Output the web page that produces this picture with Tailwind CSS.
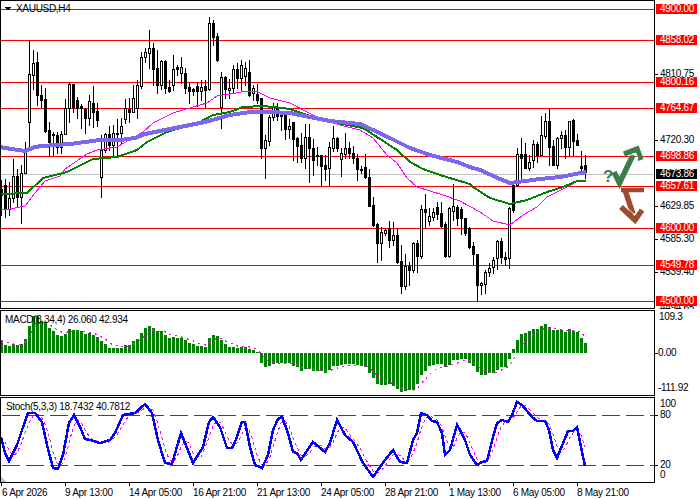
<!DOCTYPE html>
<html>
<head>
<meta charset="utf-8">
<title>XAUUSD,H4</title>
<script src="https://cdn.jsdelivr.net/npm/@tailwindcss/browser@4"></script>
</head>
<body class="bg-white">
<div class="w-[700px] h-[500px] overflow-hidden flex flex-col gap-px bg-white text-black font-['Liberation_Sans',Arial,sans-serif] text-[10px] leading-[10px] tracking-[-0.3px]">

  <!-- price panel -->
  <div class="flex h-[309px] shrink-0">
    <div class="relative w-[655px] h-[309px] border border-black">
      <svg id="main" class="block" width="653" height="307" viewBox="1 1 653 307" shape-rendering="crispEdges"></svg>
      <div class="absolute left-[15px] top-[2px] leading-[11px]">XAUUSD,H4</div>
    </div>
    <div class="relative w-[45px] h-[309px] overflow-hidden">
      <div class="absolute left-0 top-[74px] w-[3px] h-px bg-black"></div>
      <div class="absolute left-0 top-[140px] w-[3px] h-px bg-black"></div>
      <div class="absolute left-0 top-[206px] w-[3px] h-px bg-black"></div>
      <div class="absolute left-0 top-[239px] w-[3px] h-px bg-black"></div>
      <div class="absolute left-0 top-[272px] w-[3px] h-px bg-black"></div>
      <div class="absolute left-[5px] top-[69px]">4810.75</div>
      <div class="absolute left-[5px] top-[135px]">4720.30</div>
      <div class="absolute left-[5px] top-[201px]">4629.85</div>
      <div class="absolute left-[5px] top-[234px]">4585.30</div>
      <div class="absolute left-[5px] top-[267px]">4539.40</div>
      <div class="absolute left-[5px] top-[303px]">4494.65</div>
      <div class="absolute left-px top-[4px] w-[41px] h-[10px] pl-1 bg-[#ff0000] text-white">4900.00</div>
      <div class="absolute left-px top-[35px] w-[41px] h-[10px] pl-1 bg-[#ff0000] text-white">4858.02</div>
      <div class="absolute left-px top-[77px] w-[41px] h-[10px] pl-1 bg-[#ff0000] text-white">4800.16</div>
      <div class="absolute left-px top-[103px] w-[41px] h-[10px] pl-1 bg-[#ff0000] text-white">4764.67</div>
      <div class="absolute left-px top-[151px] w-[41px] h-[10px] pl-1 bg-[#ff0000] text-white">4698.86</div>
      <div class="absolute left-px top-[169px] w-[41px] h-[10px] pl-1 bg-black text-white">4673.86</div>
      <div class="absolute left-px top-[181px] w-[41px] h-[10px] pl-1 bg-[#ff0000] text-white">4657.61</div>
      <div class="absolute left-px top-[223px] w-[41px] h-[10px] pl-1 bg-[#ff0000] text-white">4600.00</div>
      <div class="absolute left-px top-[260px] w-[41px] h-[10px] pl-1 bg-[#ff0000] text-white">4549.78</div>
      <div class="absolute left-px top-[296px] w-[41px] h-[10px] pl-1 bg-[#ff0000] text-white">4500.00</div>
    </div>
  </div>

  <!-- macd panel -->
  <div class="flex h-[86px] shrink-0">
    <div class="relative w-[655px] h-[86px] border border-black">
      <svg id="macd" class="block" width="653" height="84" viewBox="1 311 653 84" shape-rendering="crispEdges"></svg>
      <div class="absolute left-[4px] top-[3px] leading-[11px]">MACD(8,34,4) 26.060 42.934</div>
    </div>
    <div class="relative w-[45px] h-[86px]">
      <div class="absolute left-0 top-[43px] w-[3px] h-px bg-black"></div>
      <div class="absolute left-[4px] top-[2px]">109.3</div>
      <div class="absolute left-[3px] top-[38px]">0.00</div>
      <div class="absolute left-[3px] top-[73px]">-111.92</div>
    </div>
  </div>

  <!-- stochastic panel -->
  <div class="flex h-[86px] shrink-0">
    <div class="relative w-[655px] h-[86px] border border-black">
      <svg id="stoch" class="block" width="653" height="84" viewBox="1 398 653 84" shape-rendering="crispEdges"></svg>
      <div class="absolute left-[5px] top-[3px] leading-[11px]">Stoch(5,3,3) 18.7432 40.7812</div>
    </div>
    <div class="relative w-[45px] h-[86px]">
      <div class="absolute left-0 top-[18px] w-[3px] h-px bg-black"></div>
      <div class="absolute left-0 top-[68px] w-[3px] h-px bg-black"></div>
      <div class="absolute left-[5px] top-[2px]">100</div>
      <div class="absolute left-[5px] top-[13px]">80</div>
      <div class="absolute left-[5px] top-[63px]">20</div>
      <div class="absolute left-[5px] top-[73px]">0</div>
    </div>
  </div>

  <!-- time axis -->
  <div class="flex pl-px -mt-px">
    <div class="w-[64px] shrink-0"><div class="w-px h-[3px] bg-black"></div><div class="mt-[2px] whitespace-nowrap pl-px">6 Apr 2026</div></div>
    <div class="w-[64px] shrink-0"><div class="w-px h-[3px] bg-black"></div><div class="mt-[2px] whitespace-nowrap">9 Apr 13:00</div></div>
    <div class="w-[64px] shrink-0"><div class="w-px h-[3px] bg-black"></div><div class="mt-[2px] whitespace-nowrap">14 Apr 05:00</div></div>
    <div class="w-[64px] shrink-0"><div class="w-px h-[3px] bg-black"></div><div class="mt-[2px] whitespace-nowrap">16 Apr 21:00</div></div>
    <div class="w-[64px] shrink-0"><div class="w-px h-[3px] bg-black"></div><div class="mt-[2px] whitespace-nowrap">21 Apr 13:00</div></div>
    <div class="w-[64px] shrink-0"><div class="w-px h-[3px] bg-black"></div><div class="mt-[2px] whitespace-nowrap">24 Apr 05:00</div></div>
    <div class="w-[64px] shrink-0"><div class="w-px h-[3px] bg-black"></div><div class="mt-[2px] whitespace-nowrap">28 Apr 21:00</div></div>
    <div class="w-[64px] shrink-0"><div class="w-px h-[3px] bg-black"></div><div class="mt-[2px] whitespace-nowrap">1 May 13:00</div></div>
    <div class="w-[64px] shrink-0"><div class="w-px h-[3px] bg-black"></div><div class="mt-[2px] whitespace-nowrap">6 May 05:00</div></div>
    <div class="w-[64px] shrink-0"><div class="w-px h-[3px] bg-black"></div><div class="mt-[2px] whitespace-nowrap">8 May 21:00</div></div>
  </div>
</div>

<script>
// candles as pixel rows: high, body top, body bottom, low, 1 = white body
var candles = [
[180,189,195,215,0],[179,185,209,217,0],[182,198,209,215,1],[159,176,198,202,1],[169,176,197,207,0],[165,173,197,223,1],[142,150,173,173,1],[41,74,122,147,1],
[50,63,75,89,1],[52,62,95,105,0],[85,95,100,107,0],[88,99,131,132,0],[122,130,142,156,0],[132,134,135,155,0],[132,135,147,153,0],[131,134,147,153,1],
[99,108,134,134,1],[82,84,108,122,1],[84,84,107,112,0],[97,100,108,118,0],[104,106,108,128,0],[108,109,118,133,0],[95,101,118,125,1],[86,103,112,127,0],
[103,111,120,126,0],[135,150,177,197,1],[133,134,150,152,1],[126,134,145,150,0],[125,133,145,155,1],[119,133,134,156,0],[118,126,133,143,1],[99,108,119,123,1],
[98,109,112,122,0],[85,98,112,112,1],[80,85,108,118,1],[52,57,86,88,1],[48,52,57,62,1],[30,48,53,68,1],[43,48,69,85,0],[50,68,85,93,0],
[60,61,85,89,1],[60,61,88,93,0],[80,87,91,92,0],[55,69,85,90,1],[65,67,69,75,0],[57,67,73,83,1],[68,73,88,93,0],[83,87,91,103,0],
[88,89,91,95,0],[82,86,91,106,0],[80,87,91,100,1],[80,86,90,107,0],[17,23,89,90,1],[20,23,37,45,0],[33,36,60,61,0],[72,77,107,128,1],
[76,77,89,98,0],[79,88,90,98,1],[65,69,88,93,1],[63,69,78,88,0],[60,65,78,90,1],[62,68,76,85,1],[60,72,95,96,0],[85,88,93,100,1],
[84,94,100,103,0],[98,98,148,158,0],[135,140,148,178,1],[115,117,141,145,1],[103,107,117,120,1],[103,107,116,120,0],[112,115,116,130,0],[113,115,129,139,0],
[119,126,129,138,1],[122,122,139,160,0],[137,138,146,162,0],[133,145,158,162,0],[124,137,158,168,1],[124,137,148,182,0],[139,148,160,175,0],[147,155,156,165,0],
[155,155,166,186,0],[155,165,169,180,0],[142,147,168,185,1],[126,138,148,151,1],[137,138,148,151,0],[148,153,159,176,1],[133,148,154,158,1],[142,148,153,158,0],
[146,153,158,163,0],[154,158,169,180,0],[166,169,170,173,0],[154,167,177,178,0],[169,177,206,206,0],[197,205,225,226,0],[223,224,243,262,0],[227,232,243,260,1],
[229,230,233,235,1],[221,228,240,247,0],[222,235,240,245,1],[228,235,262,263,0],[245,261,286,293,0],[254,266,286,289,1],[262,266,270,285,0],[242,243,270,272,1],
[240,243,256,272,0],[205,209,256,258,1],[194,209,212,227,0],[208,216,221,225,1],[208,212,217,220,1],[202,207,214,219,0],[202,213,226,227,0],[222,224,256,257,0],
[207,208,256,257,1],[184,206,211,220,1],[205,207,218,225,0],[207,209,218,234,0],[218,218,233,235,0],[227,228,247,248,0],[242,246,254,264,0],[254,254,285,301,0],
[282,283,285,294,1],[270,272,284,293,1],[263,268,272,276,1],[257,260,267,273,1],[240,241,258,269,1],[238,241,257,263,0],[252,257,259,265,0],[207,208,258,268,1],
[182,185,210,212,0],[148,154,185,186,1],[138,154,158,180,0],[143,154,168,168,0],[155,162,168,170,1],[140,144,160,167,1],[142,144,155,162,0],[116,135,155,155,1],
[113,121,136,138,1],[109,121,147,165,0],[140,146,165,165,0],[137,138,165,168,1],[131,135,138,148,1],[130,135,147,158,0],[121,121,147,155,1],[119,120,141,155,0],
[134,140,145,145,0],[151,166,168,173,0],[155,165,172,178,0]
];
var purple = [[0,147],[5,148],[25,151],[35,147],[42,146],[70,144],[100,140],[120,140],[135,138],[145,134],[165,130],[185,126],[205,122],[230,115],[250,112],[270,112],[290,113],[310,117],[330,121],[360,124],[373,130],[390,138],[410,148],[430,155],[457,162],[470,167],[480,170],[500,179],[510,183],[540,179],[560,177],[586,172]];
var green = [[1,194],[27,193],[43,178],[67,172],[93,159],[117,157],[137,150],[147,142],[167,132],[200,122],[213,115],[230,112],[243,107],[263,106],[290,109],[310,116],[337,123],[363,128],[377,137],[397,150],[410,162],[423,169],[443,176],[470,184],[473,187],[490,198],[510,204],[527,200],[547,192],[563,187],[577,181],[586,181]];
var pink = [[1,210],[10,209],[25,206],[35,193],[45,181],[60,176],[65,169],[87,154],[97,150],[117,147],[143,132],[153,123],[173,113],[193,107],[207,103],[217,96],[230,94],[247,91],[258,92],[270,98],[290,103],[307,112],[323,120],[340,125],[360,130],[373,138],[387,155],[397,163],[407,178],[417,187],[443,195],[460,201],[480,212],[493,221],[510,225],[523,215],[537,207],[547,197],[567,187],[578,181]];
var levels = [9,40,82,108,156,186,228,265,301];

function pts(a) { return a.map(function (p) { return p[0] + ',' + p[1]; }).join(' '); }
function line(a, color, width, dash) {
  return '<polyline points="' + pts(a) + '" fill="none" stroke="' + color + '" stroke-width="' + width + '"' + (dash ? ' stroke-dasharray="' + dash + '"' : '') + '/>';
}

var s = '';
s += '<rect x="0" y="174" width="654" height="1" fill="#c0c0c0"/>';
levels.forEach(function (y) { s += '<rect x="0" y="' + y + '" width="654" height="1" fill="#ff0000"/>'; });
candles.forEach(function (c, n) {
  var x = 4 * n;
  s += '<rect x="' + (x + 1) + '" y="' + c[0] + '" width="1" height="' + (c[3] - c[0] + 1) + '" fill="#000"/>';
  s += '<rect x="' + x + '" y="' + c[1] + '" width="3" height="' + (c[2] - c[1] + 1) + '" fill="#000"/>';
  if (c[4] && c[2] - c[1] > 1) s += '<rect x="' + (x + 1) + '" y="' + (c[1] + 1) + '" width="1" height="' + (c[2] - c[1] - 1) + '" fill="#fff"/>';
});
s += line(pink, '#ff00ff', 1);
s += line(green, '#008000', 2);
s += line(purple, '#7b68ee', 4);
s += '<polygon points="5,7 11,7 8,11" fill="#000"/>';
// forecast arrows
s += '<g shape-rendering="auto" fill="none" stroke-linejoin="miter">';
s += '<polyline points="614,172 619.5,183 633,155" stroke="#3c7d49" stroke-width="5.5"/>';
s += '<polyline points="624,154 637,149 641,160" stroke="#3c7d49" stroke-width="5.5"/>';
s += '<polyline points="628,156 636,153 638,159" stroke="#fff" stroke-width="0.8"/>';
s += '<polyline points="621,190 644,190" stroke="#9e4a2c" stroke-width="4.5"/>';
s += '<polyline points="625,190 633,214" stroke="#9e4a2c" stroke-width="5.5"/>';
s += '<polyline points="621,207 635,220 642,210" stroke="#9e4a2c" stroke-width="5.5"/>';
s += '<polyline points="625,206 635,215 639,209" stroke="#fff" stroke-width="0.8"/>';
s += '<text x="603" y="182" font-family="Liberation Sans, sans-serif" font-weight="700" font-size="17" fill="#3c7d49" stroke="none">?</text>';
s += '</g>';
document.getElementById('main').innerHTML = s;

// macd histogram heights in px from the zero row
var bars = [13,8,7,9,8,9,14,27,37,37,32,31,25,22,18,17,19,24,23,23,22,19,20,18,16,12,9,5,5,5,5,8,8,12,14,20,25,27,25,22,22,18,15,16,15,15,13,10,9,7,7,6,15,18,17,13,9,6,6,5,6,6,4,3,1,
-10,-14,-13,-11,-10,-10,-10,-10,-13,-14,-18,-16,-16,-18,-18,-18,-20,-17,-13,-13,-12,-11,-11,-11,-12,-13,-14,-20,-25,-31,-32,-32,-31,-33,-36,-39,-38,-37,-37,-31,-22,-18,-13,-12,-11,-11,-14,-12,-7,-7,-6,-6,-10,-13,-19,-22,-22,-20,-20,-17,-14,-14,-6,
4,13,19,20,22,24,24,27,29,26,23,23,23,21,24,22,21,15,10];
var m = '';
var sig = [], ema = bars[0];
bars.forEach(function (h, n) {
  m += '<rect x="' + (4 * n) + '" y="' + (h > 0 ? 353 - h : 353) + '" width="3" height="' + Math.abs(h) + '" fill="#008000"/>';
  ema += 0.36 * (h - ema);
  sig.push([4 * n + 1.5, Math.round(353 - ema)]);
});
m += line(sig, '#ff00ff', 1, '2 4');
document.getElementById('macd').innerHTML = m;

// stochastic main line, signal is a 3 bar average of it
var st = [[1,437],[5,453],[9,461],[17,445],[22,430],[28,413],[35,413],[42,422],[47,445],[53,468],[58,469],[63,455],[69,423],[74,415],[80,427],[85,439],[90,440],[100,443],[110,440],[115,433],[123,415],[135,413],[145,404],[152,413],[158,440],[165,463],[172,464],[181,433],[193,463],[203,447],[209,422],[213,417],[220,427],[227,448],[232,448],[235,442],[242,422],[245,422],[250,447],[255,465],[262,468],[268,455],[273,430],[278,419],[282,417],[288,433],[293,452],[297,453],[301,460],[313,442],[325,452],[330,443],[337,420],[345,435],[353,442],[363,463],[373,477],[385,460],[393,450],[400,462],[407,463],[413,440],[417,433],[421,413],[427,415],[432,421],[437,422],[442,433],[445,455],[450,450],[457,425],[460,430],[465,440],[470,455],[477,465],[482,462],[487,461],[493,437],[497,423],[502,420],[508,422],[512,415],[517,402],[522,405],[532,417],[537,421],[545,421],[549,430],[553,450],[557,458],[568,431],[573,431],[577,427],[581,447],[585,466]];
function at(x) {
  if (x <= st[0][0]) return st[0][1];
  for (var i = 1; i < st.length; i++) {
    if (x <= st[i][0]) return st[i - 1][1] + (st[i][1] - st[i - 1][1]) * (x - st[i - 1][0]) / (st[i][0] - st[i - 1][0]);
  }
  return st[st.length - 1][1];
}
var d = [];
for (var x = 1; x <= 585; x += 4) d.push([x, Math.round((at(x) + at(x - 4) + at(x - 8)) / 3)]);
var t = '';
t += '<line x1="2" y1="415.5" x2="654" y2="415.5" stroke="#e60000" stroke-width="1" stroke-dasharray="18 6"/>';
t += '<line x1="2" y1="465.5" x2="654" y2="465.5" stroke="#e60000" stroke-width="1" stroke-dasharray="18 6"/>';
t += line(d, '#ff00ff', 1, '3 3');
t += line(st, '#0000ff', 2.5);
t += '<polygon points="1,477 6,482 1,482" fill="#c0c0c0"/>';
document.getElementById('stoch').innerHTML = t;
</script>
</body>
</html>
